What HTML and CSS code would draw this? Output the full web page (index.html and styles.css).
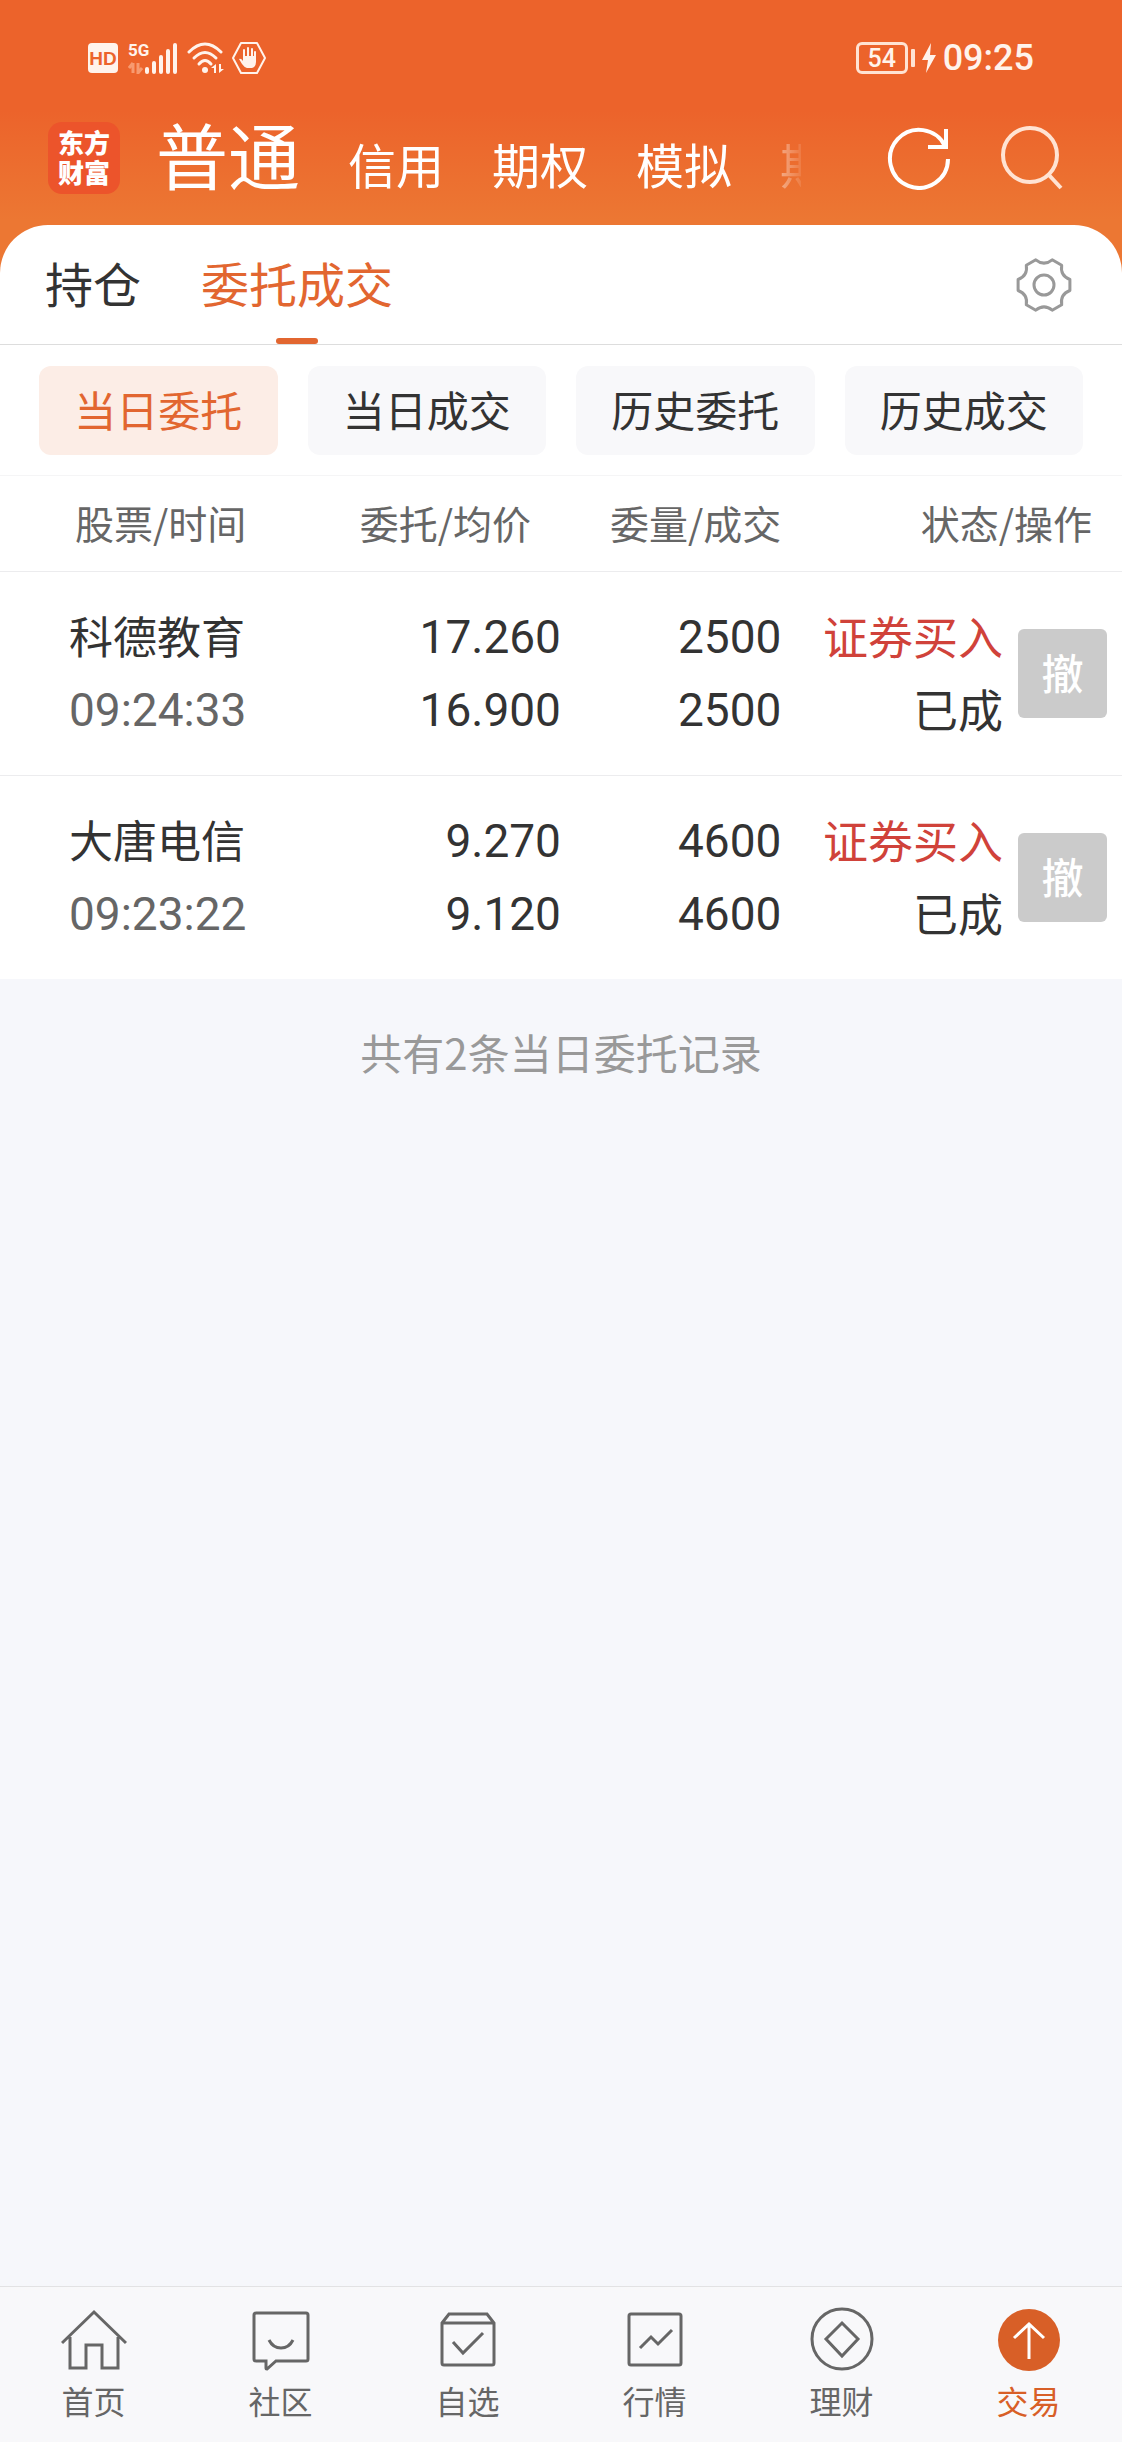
FILE: index.html
```html
<!DOCTYPE html>
<html lang="zh-CN">
<head>
    <meta charset="UTF-8">
    <meta name="viewport" content="width=device-width, initial-scale=1.0">
    <title>东方财富 - 委托成交</title>
    <link rel="stylesheet" href="styles.css">
</head>
<body>
    <header class="header">
        <div class="status-bar">
            <div class="status-left">
                <svg width="32" height="32" viewBox="0 0 32 32">
                    <rect x="0" y="1" width="30" height="30" rx="4" fill="#fff3ec"/>
                    <text x="15" y="23" class="hd-text" text-anchor="middle">HD</text>
                </svg>
                <svg width="51" height="32" viewBox="0 0 51 32">
                    <text x="0" y="14" class="net-text">5G</text>
                    <path d="M5 21v10M1 26l4-5M10 21v10l4-5" stroke="#f79a70" stroke-width="3" fill="none"/>
                    <path d="M19 27v3M26 21v9M33 15v15M40 9v21M47 3v27" stroke="#fff3ec" stroke-width="4" stroke-linecap="round"/>
                </svg>
                <svg width="37" height="32" viewBox="0 0 37 32">
                    <g fill="none" stroke="#fff3ec" stroke-width="3" stroke-linecap="round">
                        <path d="M2 10Q18 -6 34 10"/>
                        <path d="M7 16Q18 5 29 16"/>
                        <path d="M12 22Q18 15 24 22"/>
                    </g>
                    <circle cx="18" cy="28" r="3" fill="#fff3ec"/>
                    <path d="M29 22v9h-2v-5h-3zM32 31v-9h2v5h3z" fill="#fff3ec"/>
                </svg>
                <svg width="34" height="34" viewBox="0 0 34 34">
                    <path d="M9 2h16l8 15-8 15H9L1 17z" fill="none" stroke="#fff3ec" stroke-width="2" stroke-linejoin="round"/>
                    <path d="M12 19V9M16 18V7M20 18V8M23 19V11" stroke="#fff3ec" stroke-width="2" stroke-linecap="round"/>
                    <path d="M11 15h13v6q0 5-4 6h-5q-3-1-5-4l-3-5q2-1 4 2z" fill="#fff3ec"/>
                </svg>
            </div>
            <div class="status-right">
                <span class="battery">54</span>
                <svg width="16" height="30" viewBox="0 0 16 30">
                    <path d="M10 0L1 17h6L5 30 15 12H9z" fill="#fff3ec"/>
                </svg>
                <span class="clock">09:25</span>
            </div>
        </div>

        <div class="title-bar">
            <a href="#" class="logo">东方<br>财富</a>
            <nav class="account-nav">
                <a href="#" class="account-link active">普通</a>
                <a href="#" class="account-link">信用</a>
                <a href="#" class="account-link">期权</a>
                <a href="#" class="account-link">模拟</a>
                <a href="#" class="account-link">期货</a>
            </nav>
            <div class="tools">
                <button type="button" class="icon-btn" aria-label="刷新">
                    <svg width="64" height="64" viewBox="0 0 64 64" fill="none" stroke="#fff" stroke-width="4">
                        <path d="M61 33A29 29 0 1 1 58 20"/>
                        <path d="M59 3v18H41"/>
                    </svg>
                </button>
                <button type="button" class="icon-btn" aria-label="搜索">
                    <svg width="64" height="64" viewBox="0 0 64 64" fill="none" stroke="#ffe3d3" stroke-width="4">
                        <circle cx="30" cy="29" r="27"/>
                        <path d="M48 48l13 14"/>
                    </svg>
                </button>
            </div>
        </div>
    </header>

    <main class="main-content">
        <div class="panel">
            <div class="tabs">
                <a href="#" class="tab">持仓</a>
                <a href="#" class="tab active">委托成交</a>
                <button type="button" class="icon-btn settings" aria-label="设置">
                    <svg width="56" height="56" viewBox="0 0 56 56" fill="none" stroke="#999" stroke-width="3" stroke-linejoin="round">
                        <path d="M53.9 33.5Q44 37.3 45.7 47.7L36.2 53.2Q28 46.5 19.8 53.2L10.3 47.7Q12 37.3 2.1 33.5V22.5Q12 18.7 10.3 8.3L19.8 2.8Q28 9.5 36.2 2.8L45.7 8.3Q44 18.7 53.9 22.5Z"/>
                        <circle cx="28" cy="28" r="10"/>
                    </svg>
                </button>
            </div>

            <div class="filters">
                <button type="button" class="filter active">当日委托</button>
                <button type="button" class="filter">当日成交</button>
                <button type="button" class="filter">历史委托</button>
                <button type="button" class="filter">历史成交</button>
            </div>

            <table class="orders">
                <thead>
                    <tr>
                        <th class="col-stock">股票/时间</th>
                        <th class="col-price">委托/均价</th>
                        <th class="col-amount">委量/成交</th>
                        <th class="col-status">状态/操作</th>
                    </tr>
                </thead>
                <tbody>
                    <tr>
                        <td class="stock"><div class="label">科德教育</div><div class="num time">09:24:33</div></td>
                        <td class="num"><div>17.260</div><div>16.900</div></td>
                        <td class="num amount"><div>2500</div><div>2500</div></td>
                        <td>
                            <div class="status">
                                <div><div class="label buy">证券买入</div><div class="label">已成</div></div>
                                <button type="button" class="cancel-btn">撤</button>
                            </div>
                        </td>
                    </tr>
                    <tr>
                        <td class="stock"><div class="label">大唐电信</div><div class="num time">09:23:22</div></td>
                        <td class="num"><div>9.270</div><div>9.120</div></td>
                        <td class="num amount"><div>4600</div><div>4600</div></td>
                        <td>
                            <div class="status">
                                <div><div class="label buy">证券买入</div><div class="label">已成</div></div>
                                <button type="button" class="cancel-btn">撤</button>
                            </div>
                        </td>
                    </tr>
                </tbody>
            </table>
        </div>

        <p class="summary">共有2条当日委托记录</p>
    </main>

    <nav class="bottom-nav">
        <a href="#" class="nav-item">
            <svg class="nav-icon" viewBox="0 0 66 66">
                <path d="M1 36L33 5l32 31M9 30v31h16V38h16v23h16V30"/>
            </svg>
            <span>首页</span>
        </a>
        <a href="#" class="nav-item">
            <svg class="nav-icon" viewBox="0 0 66 66">
                <path d="M8 6h50q2 0 2 2v44q0 2-2 2H28l-9 8q-1 0-1-1v-7H8q-2 0-2-2V8q0-2 2-2z"/>
                <path d="M21 33q4 8 12 8t12-8"/>
            </svg>
            <span>社区</span>
        </a>
        <a href="#" class="nav-item">
            <svg class="nav-icon" viewBox="0 0 66 66">
                <path d="M7 16l7-9h38l7 9v40q0 2-2 2H9q-2 0-2-2zM7 16h52M18 35l10 11 20-20"/>
            </svg>
            <span>自选</span>
        </a>
        <a href="#" class="nav-item">
            <svg class="nav-icon" viewBox="0 0 66 66">
                <rect x="7" y="7" width="52" height="51" rx="2"/>
                <path d="M18 41l11-11 7 7 14-14"/>
            </svg>
            <span>行情</span>
        </a>
        <a href="#" class="nav-item">
            <svg class="nav-icon" viewBox="0 0 66 66">
                <circle cx="33" cy="32" r="30"/>
                <path d="M33 16l16 16-16 17-16-17z"/>
            </svg>
            <span>理财</span>
        </a>
        <a href="#" class="nav-item active">
            <svg class="nav-icon" viewBox="0 0 66 66">
                <circle cx="33" cy="33" r="31"/>
                <path d="M33 52V17M18 31l15-14 15 14"/>
            </svg>
            <span>交易</span>
        </a>
    </nav>
</body>
</html>
```
FILE: styles.css
```css
* {
    margin: 0;
    padding: 0;
    box-sizing: border-box;
}

body {
    display: flex;
    flex-direction: column;
    min-height: 100vh;
    background: #f6f7fb;
    color: #333;
    font-family: "Noto Sans CJK SC", sans-serif;
}

a {
    color: inherit;
    text-decoration: none;
}

button {
    border: none;
    font-family: inherit;
    cursor: pointer;
}

svg {
    display: block;
}

/* Header */
.header {
    padding-bottom: 58px;
    background: linear-gradient(#ec632b 110px, #ec7733 220px);
    color: #fff;
}

.status-bar {
    display: flex;
    justify-content: space-between;
    padding: 40px 88px 25px;
    color: #fff3ec;
}

.status-left,
.status-right {
    display: flex;
    align-items: center;
    height: 36px;
}

.status-left {
    gap: 8px;
}

.status-right {
    gap: 6px;
}

.hd-text {
    font: bold 19px "Liberation Sans", sans-serif;
    fill: #ec632b;
}

.net-text {
    font: bold 17px Roboto, sans-serif;
    fill: #fff3ec;
}

.battery {
    position: relative;
    width: 52px;
    height: 32px;
    margin-right: 7px;
    border: 3px solid #ffe3d3;
    border-radius: 6px;
    font: 500 25px/28px Roboto, sans-serif;
    text-align: center;
}

.battery::after {
    content: "";
    position: absolute;
    top: 4px;
    right: -10px;
    width: 4px;
    height: 18px;
    border-radius: 1px;
    background: #ffe3d3;
}

.clock {
    font: 500 36px/38px Roboto, sans-serif;
}

.title-bar {
    display: flex;
    align-items: center;
    padding: 0 58px 0 48px;
}

.logo {
    width: 72px;
    height: 72px;
    padding: 5px 0;
    border-radius: 14px;
    background: #ec542b;
    font-size: 26px;
    font-weight: 900;
    line-height: 30px;
    text-align: center;
}

.account-nav {
    display: flex;
    flex: 1;
    align-items: baseline;
    gap: 48px;
    margin: 0 86px 0 36px;
    padding-bottom: 10px;
    overflow: hidden;
    white-space: nowrap;
    -webkit-mask-image: linear-gradient(90deg, #000 calc(100% - 60px), rgba(0, 0, 0, 0.1));
    mask-image: linear-gradient(90deg, #000 calc(100% - 60px), rgba(0, 0, 0, 0.1));
}

.account-link {
    font-size: 48px;
    line-height: 68px;
}

.account-link.active {
    font-size: 72px;
    line-height: 104px;
}

.tools {
    display: flex;
    gap: 49px;
}

.icon-btn {
    background: none;
}

/* Panel */
.main-content {
    flex: 1;
    margin-top: -48px;
}

.panel {
    border-radius: 48px 48px 0 0;
    background: #fff;
}

.tabs {
    display: flex;
    align-items: center;
    gap: 60px;
    height: 120px;
    padding: 0 50px 0 45px;
    border-bottom: 1px solid #ddd;
}

.tab {
    position: relative;
    padding-bottom: 4px;
    font-size: 48px;
    line-height: 115px;
}

.tab.active {
    color: #e26630;
}

.tab.active::after {
    content: "";
    position: absolute;
    bottom: 0;
    left: 50%;
    width: 42px;
    height: 6px;
    margin-left: -21px;
    border-radius: 3px;
    background: #e26630;
}

.settings {
    margin-left: auto;
}

.filters {
    display: flex;
    gap: 30px;
    padding: 21px 39px 20px;
    border-bottom: 1px solid #f5f5f6;
}

.filter {
    flex: 1;
    height: 89px;
    padding-bottom: 4px;
    border-radius: 12px;
    background: #f8f8fa;
    color: #333;
    font-size: 42px;
}

.filter.active {
    background: #fcede6;
    color: #e26630;
}

/* Orders */
.orders {
    width: 100%;
    border-collapse: separate;
    border-spacing: 0;
    table-layout: fixed;
}

.orders th {
    height: 96px;
    padding-bottom: 4px;
    border-bottom: 1px solid #ececee;
    color: #666;
    font-size: 39px;
    font-weight: 400;
    text-align: right;
}

.orders .col-stock {
    width: 30%;
    padding-left: 75px;
    text-align: left;
}

.orders .col-price {
    width: 20%;
    padding-right: 30px;
}

.orders .col-amount {
    width: 20%;
    padding-right: 4px;
}

.orders .col-status {
    width: 30%;
    padding-right: 30px;
}

.orders td {
    height: 204px;
    border-bottom: 1px solid #ececee;
    font-size: 45px;
    line-height: 73px;
    text-align: right;
}

.orders tr:last-child td {
    height: 203px;
    border-bottom: none;
}

.orders .stock {
    padding-left: 69px;
    font-size: 44px;
    text-align: left;
}

.orders .label {
    padding-bottom: 4px;
    line-height: 69px;
}

.orders .num {
    font-family: Roboto, sans-serif;
    font-size: 46px;
}

.orders .amount {
    padding-right: 4px;
}

.orders .time {
    color: #666;
}

.status {
    display: flex;
    align-items: center;
    justify-content: flex-end;
    gap: 15px;
    padding-right: 15px;
}

.orders .buy {
    color: #d0423a;
}

.cancel-btn {
    width: 89px;
    height: 89px;
    padding-bottom: 4px;
    border-radius: 6px;
    background: #cbcbcb;
    color: #fff;
    font-size: 42px;
    font-weight: 500;
}

.summary {
    padding: 43px 0;
    color: #999;
    font-size: 42px;
    line-height: 60px;
    text-align: center;
}

/* Bottom navigation */
.bottom-nav {
    display: flex;
    padding: 20px 0 22px;
    border-top: 1px solid #e2e2e4;
    background: #f8f8fa;
}

.nav-item {
    display: flex;
    flex: 1;
    flex-direction: column;
    align-items: center;
    gap: 7px;
    color: #666;
    font-size: 32px;
    line-height: 40px;
}

.nav-icon {
    width: 66px;
    height: 66px;
    fill: none;
    stroke: #666;
    stroke-width: 3;
}

.nav-item.active {
    color: #d85f27;
}

.nav-item.active circle {
    fill: #d85f27;
    stroke: none;
}

.nav-item.active path {
    stroke: #fff;
}
```
